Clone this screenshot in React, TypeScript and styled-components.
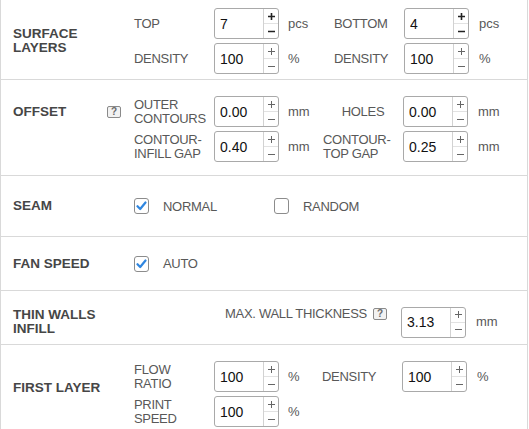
import React from "react";
import styled, { createGlobalStyle } from "styled-components";

const Global = createGlobalStyle`
  html, body { margin: 0; padding: 0; background: #fff; }
  body { font-family: "Liberation Sans", Arial, sans-serif; }
`;

const Panel = styled.div`
  width: 528px;
  box-sizing: border-box;
  border-left: 1px solid #d9d9d9;
  border-right: 1px solid #d9d9d9;
  background: #fff;
`;

const Row = styled.div<{ $h: number; $pt?: number; $align?: string }>`
  display: flex;
  box-sizing: border-box;
  height: ${(p) => p.$h}px;
  padding-top: ${(p) => p.$pt ?? 0}px;
  align-items: ${(p) => p.$align ?? "center"};
  border-bottom: 1px solid #d9d9d9;
`;

const TitleCell = styled.div<{ $h?: number; $self?: string }>`
  width: 133px;
  box-sizing: border-box;
  padding-left: 12px;
  padding-right: 13px;
  display: flex;
  align-items: center;
  justify-content: space-between;
  align-self: ${(p) => p.$self ?? "auto"};
  ${(p) => (p.$h ? `height: ${p.$h}px;` : "")}
  flex-shrink: 0;
`;

const Title = styled.div`
  font-size: 13.5px;
  font-weight: bold;
  line-height: 14px;
  color: #464646;
`;

const Help = styled.span`
  width: 14px;
  height: 12px;
  box-sizing: border-box;
  border: 1px solid #8a8a8a;
  border-radius: 2px;
  background: #f2f2f2;
  color: #6a6a6a;
  font-size: 10px;
  font-weight: bold;
  letter-spacing: 0;
  line-height: 10px;
  display: inline-flex;
  align-items: center;
  justify-content: center;
  flex-shrink: 0;
`;

const Grid = styled.div<{ $cols: string; $self?: string; $mt?: number }>`
  display: grid;
  grid-template-columns: ${(p) => p.$cols};
  row-gap: 4px;
  align-items: center;
  align-self: ${(p) => p.$self ?? "auto"};
  margin-top: ${(p) => p.$mt ?? 0}px;
`;

const Label = styled.div<{ $center?: boolean; $end?: boolean; $top?: boolean }>`
  font-size: 13px;
  letter-spacing: -0.3px;
  line-height: 14px;
  color: #585858;
  display: flex;
  align-items: center;
  gap: 6px;
  justify-content: ${(p) => (p.$center ? "center" : p.$end ? "flex-end" : "flex-start")};
  ${(p) => (p.$end ? "padding-right: 14px;" : "")}
  align-self: ${(p) => (p.$top ? "start" : "center")};
`;

const Unit = styled.div`
  font-size: 13px;
  line-height: 14px;
  color: #585858;
  padding-left: 10px;
`;

const SpinBox = styled.div`
  width: 65px;
  height: 31px;
  box-sizing: border-box;
  border: 1px solid #a9a9a9;
  border-radius: 3px;
  display: flex;
  background: #fff;
  overflow: hidden;
`;

const Value = styled.input`
  flex: 1;
  min-width: 0;
  border: none;
  outline: none;
  padding: 0 0 0 5px;
  font-family: "Liberation Sans", Arial, sans-serif;
  font-size: 14px;
  color: #111;
  background: transparent;
`;

const Steps = styled.div`
  width: 14px;
  border-left: 1px solid #d2d2d2;
  display: flex;
  flex-direction: column;
`;

const Step = styled.div<{ $first?: boolean }>`
  flex: 1;
  display: flex;
  align-items: center;
  justify-content: center;
  ${(p) => (p.$first ? "border-bottom: 1px solid #e2e2e2;" : "")}
`;

const CheckGroup = styled.div`
  display: flex;
  align-items: center;
`;

const CheckItem = styled.label<{ $w?: number }>`
  display: flex;
  align-items: center;
  gap: 14px;
  ${(p) => (p.$w ? `width: ${p.$w}px;` : "")}
  font-size: 13px;
  letter-spacing: -0.3px;
  color: #585858;
`;

const Box = styled.span`
  width: 15px;
  height: 16px;
  box-sizing: border-box;
  border: 1px solid #8c8c8c;
  border-radius: 3px;
  display: inline-flex;
  align-items: center;
  justify-content: center;
  background: #fff;
`;

function Spin({ value, bold }: { value: string; bold?: boolean }) {
  const c = bold ? "#222" : "#666";
  const w = bold ? 1.6 : 1;
  return (
    <SpinBox>
      <Value defaultValue={value} readOnly />
      <Steps>
        <Step $first>
          <svg width="9" height="9" viewBox="0 0 9 9">
            <path d="M1 4.5H8M4.5 1V8" stroke={c} strokeWidth={w} />
          </svg>
        </Step>
        <Step>
          <svg width="9" height="9" viewBox="0 0 9 9">
            <path d="M1 4.5H8" stroke={c} strokeWidth={w} />
          </svg>
        </Step>
      </Steps>
    </SpinBox>
  );
}

function Check({ checked, label, w }: { checked?: boolean; label: string; w?: number }) {
  return (
    <CheckItem $w={w}>
      <Box>
        {checked && (
          <svg width="11" height="10" viewBox="0 0 11 10">
            <path d="M1.5 5.2L4.2 8L9.5 1.5" fill="none" stroke="#2f86e0" strokeWidth="2.2" strokeLinecap="round" strokeLinejoin="round" />
          </svg>
        )}
      </Box>
      {label}
    </CheckItem>
  );
}

export default function App() {
  return (
    <>
      <Global />
      <Panel>
        <Row $h={80} $pt={3}>
          <TitleCell>
            <Title>
              SURFACE
              <br />
              LAYERS
            </Title>
          </TitleCell>
          <Grid $cols="80px 64px 56px 70px 65px auto">
            <Label>TOP</Label>
            <Spin value="7" bold />
            <Unit>pcs</Unit>
            <Label>BOTTOM</Label>
            <Spin value="4" bold />
            <Unit>pcs</Unit>
            <Label>DENSITY</Label>
            <Spin value="100" />
            <Unit>%</Unit>
            <Label>DENSITY</Label>
            <Spin value="100" />
            <Unit>%</Unit>
          </Grid>
        </Row>

        <Row $h={96} $pt={16} $align="flex-start">
          <TitleCell $h={31}>
            <Title>OFFSET</Title>
            <Help>?</Help>
          </TitleCell>
          <Grid $cols="80px 64px 45px 80px 65px auto">
            <Label>
              OUTER
              <br />
              CONTOURS
            </Label>
            <Spin value="0.00" />
            <Unit>mm</Unit>
            <Label $center>HOLES</Label>
            <Spin value="0.00" />
            <Unit>mm</Unit>
            <Label>
              CONTOUR-
              <br />
              INFILL GAP
            </Label>
            <Spin value="0.40" />
            <Unit>mm</Unit>
            <Label>
              CONTOUR-
              <br />
              TOP GAP
            </Label>
            <Spin value="0.25" />
            <Unit>mm</Unit>
          </Grid>
        </Row>

        <Row $h={61}>
          <TitleCell>
            <Title>SEAM</Title>
          </TitleCell>
          <CheckGroup>
            <Check checked label="NORMAL" w={140} />
            <Check label="RANDOM" />
          </CheckGroup>
        </Row>

        <Row $h={54}>
          <TitleCell>
            <Title>FAN SPEED</Title>
          </TitleCell>
          <CheckGroup>
            <Check checked label="AUTO" />
          </CheckGroup>
        </Row>

        <Row $h={54} $pt={9}>
          <TitleCell>
            <Title>
              THIN WALLS
              <br />
              INFILL
            </Title>
          </TitleCell>
          <Grid $cols="267px 65px auto">
            <Label $end $top>
              MAX. WALL THICKNESS
              <Help>?</Help>
            </Label>
            <Spin value="3.13" />
            <Unit>mm</Unit>
          </Grid>
        </Row>

        <Row $h={86} $align="stretch">
          <TitleCell $self="center">
            <Title>FIRST LAYER</Title>
          </TitleCell>
          <Grid $cols="80px 64px 44px 80px 65px auto" $self="flex-start" $mt={16}>
            <Label>
              FLOW
              <br />
              RATIO
            </Label>
            <Spin value="100" />
            <Unit>%</Unit>
            <Label>DENSITY</Label>
            <Spin value="100" />
            <Unit>%</Unit>
            <Label>
              PRINT
              <br />
              SPEED
            </Label>
            <Spin value="100" />
            <Unit>%</Unit>
          </Grid>
        </Row>
      </Panel>
    </>
  );
}
